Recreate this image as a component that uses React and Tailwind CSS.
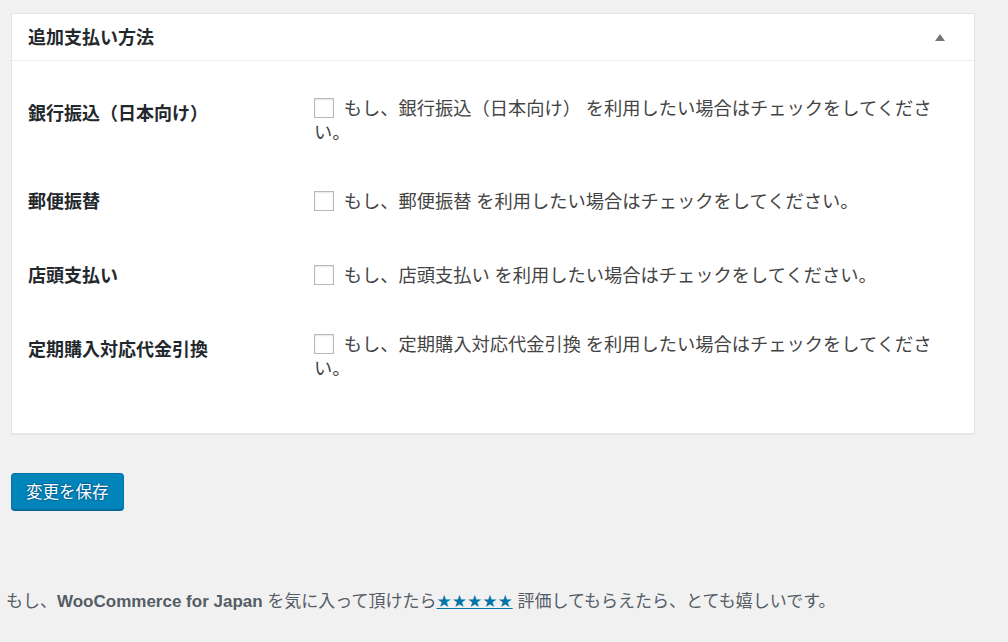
import React from 'react';

const font = { fontFamily: '"Noto Sans", "Noto Sans CJK JP", sans-serif' };

const methods = [
  { label: '銀行振込（日本向け）', name: '銀行振込（日本向け）' },
  { label: '郵便振替', name: '郵便振替' },
  { label: '店頭支払い', name: '店頭支払い' },
  { label: '定期購入対応代金引換', name: '定期購入対応代金引換' },
];

const Row = ({ label, name }) => (
  <div className="flex items-center">
    <div className="self-start w-[286px] shrink-0 py-[25px] text-[18px] leading-[24px] font-bold text-[#23282d]">
      {label}
    </div>
    <div className="flex-1 py-[20px] pr-[30px] text-[18.25px] leading-[24px] text-[#444]">
      <input
        type="checkbox"
        className="appearance-none w-[20px] h-[20px] bg-white border border-[#b4b9be] shadow-[inset_0_1px_2px_rgba(0,0,0,0.1)] align-middle -mt-[5px] mr-[5px]"
      />{' '}
      もし、{name} を利用したい場合はチェックをしてください。
    </div>
  </div>
);

export default function App() {
  return (
    <div className="min-h-screen bg-[#f1f1f1]" style={font}>
      <div className="pt-[13px] pl-[11px] pr-[33px]">
        {/* Postbox */}
        <div className="bg-white border border-[#e5e5e5] shadow-[0_1px_1px_rgba(0,0,0,0.04)]">
          <div className="h-[47px] flex items-center justify-between pl-[16px] pr-[29px] border-b border-[#eee]">
            <h2 className="text-[18px] font-bold text-[#23282d] leading-[24px]">追加支払い方法</h2>
            <svg width="10" height="7" viewBox="0 0 10 7">
              <polygon points="5,0 10,7 0,7" fill="#72777c" />
            </svg>
          </div>
          <div className="pl-[16px] pt-[15px] pb-[33px]">
            {methods.map((m) => (
              <Row key={m.label} {...m} />
            ))}
          </div>
        </div>

        <button className="mt-[39px] h-[37px] px-[14px] rounded-[4px] bg-[#0085ba] border border-[#0073aa] border-b-[#006799] shadow-[0_1px_0_#006799] text-white text-[16.5px] leading-[24px] [text-shadow:0_-1px_1px_#006799,1px_0_1px_#006799,0_1px_1px_#006799,-1px_0_1px_#006799]">
          変更を保存
        </button>
      </div>

      <p
        className="mt-[79px] pl-[6px] text-[17px] leading-[24px] text-[#555d66]"
        style={{ fontFamily: '"Liberation Sans", "Noto Sans CJK JP", sans-serif' }}
      >
        もし、<strong className="font-bold">WooCommerce for Japan</strong> を気に入って頂けたら
        <a href="#" className="text-[#0073aa] underline" style={{ fontFamily: '"DejaVu Sans", sans-serif' }}>
          ★★★★★
        </a>{' '}
        評価してもらえたら、とても嬉しいです。
      </p>
    </div>
  );
}
